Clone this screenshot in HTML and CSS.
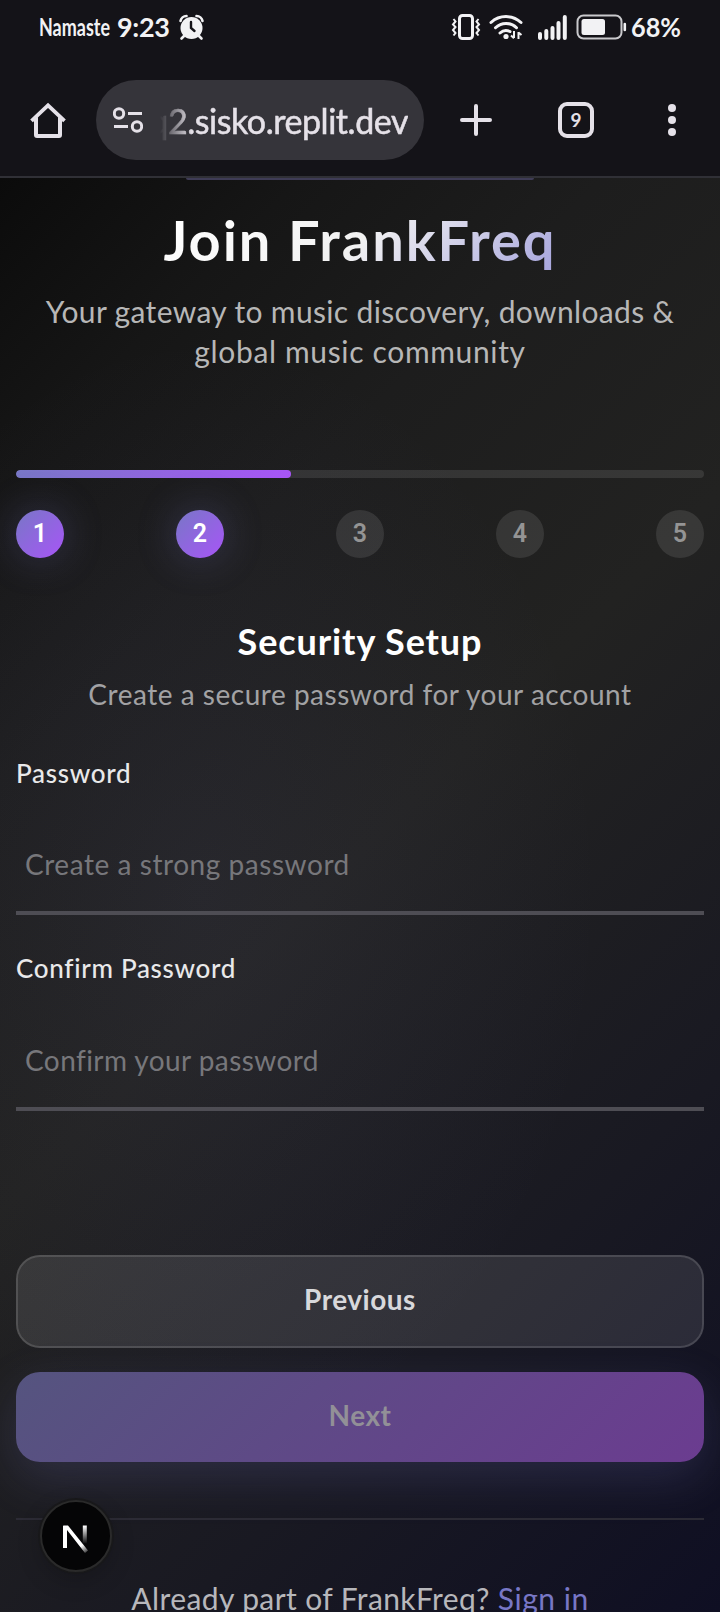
FILE: index.html
```html
<!DOCTYPE html>
<html lang="en">
<head>
<meta charset="utf-8">
<title>Join FrankFreq</title>
<link rel="stylesheet" href="styles.css">
</head>
<body>
<div class="screen">
  <header class="chrome">
    <div class="status">
      <svg class="status-left" width="172" height="36" viewBox="0 0 172 36">
        <g class="status-text">
          <text x="0" y="28" font-size="25" textLength="71" lengthAdjust="spacingAndGlyphs">Namaste</text>
          <text x="78" y="29" font-size="27" textLength="53" lengthAdjust="spacing">9:23</text>
        </g>
        <g fill="none" stroke="#f2f2f4" stroke-linecap="round">
          <circle cx="152.500" cy="20" r="11" fill="#f2f2f4" stroke="none"/>
          <path d="M141.500 13a6 6 0 0 1 6-5M163.500 13a6 6 0 0 0-6-5" stroke-width="2.600"/>
          <path d="M145 28l-2.500 2.500M160 28l2.500 2.500" stroke-width="2.600"/>
          <path d="M152 14v6l3.500 3" stroke="#141318" stroke-width="2.400"/>
        </g>
      </svg>
      <svg class="status-right" width="232" height="36" viewBox="0 0 232 36">
        <g fill="none" stroke="#f2f2f4" stroke-width="2.600">
          <rect x="9.500" y="7.500" width="13" height="23" rx="3" stroke-width="3"/>
          <path d="M3.500 11l2 2.500-2.500 3 2.500 2.500-2.500 3 2.500 3-2 2.500M28.500 11l-2 2.500 2.500 3-2.500 2.500 2.500 3-2.500 3 2 2.500" stroke-width="2"/>
          <g stroke-linecap="round" stroke-width="3">
            <path d="M41 14.500a22 22 0 0 1 30 0M45.500 19.700a15 15 0 0 1 21 0M50 25a9 9 0 0 1 10-1.500"/>
          </g>
          <circle cx="56" cy="28.500" r="2.600" fill="#f2f2f4" stroke="none"/>
          <path d="M64 23v7M61 27.500l3 2.800M68.500 31v-7M68.500 24.500l3 2.500" stroke-width="2"/>
          <g stroke-width="4" stroke-linecap="round">
            <path d="M90 26v4M96.300 23v7M102.500 20v10M108.500 15v15M114.800 9v21"/>
          </g>
          <rect x="127.500" y="7.500" width="44" height="23" rx="6" stroke-width="2" stroke="#c9c9cc"/>
          <rect x="131.500" y="11" width="23.500" height="16" rx="2.500" fill="#f2f2f4" stroke="none"/>
          <path d="M174.800 16v6" stroke-linecap="round"/>
        </g>
        <g class="status-text"><text x="181" y="29" font-size="27" textLength="50" lengthAdjust="spacingAndGlyphs">68%</text></g>
      </svg>
    </div>
    <div class="toolbar">
      <svg width="36" height="36" viewBox="0 0 36 36" fill="none" stroke="#e5e1e8" stroke-width="4" stroke-linejoin="round" stroke-linecap="round">
        <path d="M2 17.500L18 2.500 34 17.500" stroke-linecap="square" stroke-linejoin="miter" transform="translate(1 1) scale(.945)"/>
        <path d="M6 16v17a1 1 0 0 0 1 1h22a1 1 0 0 0 1-1V16"/>
      </svg>
      <div class="omnibox">
        <svg width="30" height="26" viewBox="0 0 30 26" fill="none" stroke="#e5e1e8" stroke-width="3">
          <circle cx="6" cy="6.500" r="4.700"/><path d="M15 6.500h14M1 19.500h14"/><circle cx="24" cy="19.500" r="4.700"/>
        </svg>
        <div class="url"><span class="url-text">q2.sisko.replit.dev</span></div>
      </div>
      <svg class="plus" width="32" height="32" viewBox="0 0 32 32" fill="none" stroke="#e5e1e8" stroke-width="4" stroke-linecap="round"><path d="M16 2v28M2 16h28"/></svg>
      <div class="tabs">9</div>
      <svg class="dots" width="8" height="32" viewBox="0 0 8 32" fill="#e5e1e8"><circle cx="4" cy="4" r="4"/><circle cx="4" cy="16" r="4"/><circle cx="4" cy="28" r="4"/></svg>
    </div>
  </header>
  <main class="page">
    <div class="logo-edge"></div>
    <h1 class="title"><span class="title-text">Join FrankFreq</span></h1>
    <p class="tagline"><span class="tag-a">Your gateway to music discovery, downloads &amp;</span><br><span class="tag-b">global music community</span></p>
    <div class="progress"><div class="progress-fill" style="width:40%"></div></div>
    <div class="steps">
      <span class="step on">1</span><span class="step on">2</span><span class="step">3</span><span class="step">4</span><span class="step">5</span>
    </div>
    <h2 class="section-title">Security Setup</h2>
    <p class="section-sub">Create a secure password for your account</p>
    <div class="field first">
      <label class="label" for="pw">Password</label>
      <input class="input" id="pw" type="password" placeholder="Create a strong password">
    </div>
    <div class="field second">
      <label class="label" for="pw2">Confirm Password</label>
      <input class="input confirm" id="pw2" type="password" placeholder="Confirm your password">
    </div>
    <button class="btn prev">Previous</button>
    <button class="btn next"><span class="next-text">Next</span></button>
    <div class="footer">Already part of FrankFreq? <a class="signin">Sign in</a></div>
    <div class="dev-badge">
      <svg width="72" height="72" viewBox="0 0 72 72" fill="none">
        <defs>
          <linearGradient id="ga" x1="44" y1="44" x2="50" y2="53" gradientUnits="userSpaceOnUse"><stop stop-color="#fff"/><stop offset="1" stop-color="#fff" stop-opacity="0"/></linearGradient>
          <linearGradient id="gb" x1="0" y1="26" x2="0" y2="44" gradientUnits="userSpaceOnUse"><stop stop-color="#fff"/><stop offset="1" stop-color="#fff" stop-opacity="0"/></linearGradient>
        </defs>
        <path d="M25 48V26" stroke="#fff" stroke-width="4"/>
        <path d="M23 25.500h5L48 50.500l-3 2.500L27 30z" fill="url(#ga)"/>
        <path d="M44.800 25.500v18" stroke="url(#gb)" stroke-width="4"/>
      </svg>
    </div>
  </main>
</div>
</body>
</html>
```
FILE: styles.css
```css
* { box-sizing: border-box; margin: 0; padding: 0; }
body { background: #0c0c0c; font-family: Lato, "Open Sans", sans-serif; font-kerning: normal; }
.screen { width: 720px; height: 1612px; overflow: hidden; display: flex; flex-direction: column; }

/* browser chrome */
.chrome { flex: none; height: 178px; background: #141318; border-bottom: 2px solid #303036; }
.status { height: 80px; padding: 8px 38px 0 39px; display: flex; justify-content: space-between; align-items: flex-start; }
.status-text { fill: #f2f2f4; font-family: Lato, sans-serif; font-weight: 700; }
.toolbar { height: 80px; display: flex; align-items: center; padding: 0 44px 0 30px; }
.omnibox { width: 328px; height: 80px; margin-left: 30px; padding-left: 17px; border-radius: 40px; background: #35343a; display: flex; align-items: center; }
.url { width: 248px; height: 48px; margin-left: 17px; padding-top: 2px; overflow: hidden; display: flex; justify-content: flex-end; -webkit-mask-image: linear-gradient(90deg, transparent 0, #000 32px); mask-image: linear-gradient(90deg, transparent 0, #000 32px); }
.url-text { font-size: 34px; line-height: 46px; letter-spacing: -0.45px; color: #e5e1e8; white-space: nowrap; -webkit-text-stroke: 0.5px #e5e1e8; }
.plus { margin-left: 36px; }
.tabs { width: 36px; height: 36px; margin-left: 66px; border: 4px solid #e5e1e8; border-radius: 9px; color: #e5e1e8; font: 700 19px/28px Lato, sans-serif; text-align: center; }
.dots { margin-left: auto; }

/* page */
.page { position: relative; flex: 1; min-height: 0; padding: 0 16px; overflow: hidden; text-align: center;
  background:
    radial-gradient(ellipse 400px 560px at 28% 50%, rgba(120, 119, 198, 0.08), transparent),
    linear-gradient(135deg, #0b0b0b 0%, #161616 14%, #1d1d1d 28%, #222221 48%, #191922 75%, #0f0f23 100%); }
.logo-edge { width: 348px; height: 2px; margin: 0 auto; background: #3f3c56; border-radius: 0 0 20px 20px; }
.title { margin-top: 26px; height: 68px; font-size: 56px; line-height: 68px; font-weight: 700; letter-spacing: 1.95px; }
.title-text { background: linear-gradient(135deg, #fff 0%, #f2f2f2 50%, #a5a3dc 100%); -webkit-background-clip: text; background-clip: text; color: transparent; display: inline-block; }
.tagline { margin-top: 17px; font-size: 30px; line-height: 40px; color: #b7b7b7; white-space: nowrap; }
.tag-a { letter-spacing: 0.35px; }
.tag-b { letter-spacing: 0.65px; }
.progress { margin-top: 99px; height: 8px; border-radius: 4px; background: rgba(255, 255, 255, 0.1); overflow: hidden; }
.progress-fill { height: 8px; border-radius: 4px; background: linear-gradient(90deg, #7877c6, #a855f7); }
.steps { margin-top: 32px; display: flex; justify-content: space-between; }
.step { width: 48px; height: 48px; border-radius: 50%; background: rgba(255, 255, 255, 0.1); color: #949494; font: 600 25px/48px Roboto, sans-serif; }
.step.on { background: linear-gradient(135deg, #7877c6, #a855f7); color: #fff; box-shadow: 0 0 40px rgba(120, 119, 198, 0.3); }
.section-title { margin-top: 61px; font-size: 36px; line-height: 44px; font-weight: 700; letter-spacing: 0.9px; color: #fff; }
.section-sub { margin-top: 11px; font-size: 28px; line-height: 40px; letter-spacing: 0.52px; color: #a2a2a4; }
.field { text-align: left; display: flex; flex-direction: column; gap: 28px; }
.first { margin-top: 43px; }
.second { margin-top: 37px; }
.label { font-size: 26px; line-height: 32px; font-weight: 500; letter-spacing: 0.7px; color: #e9e9ea; }
.input { width: 100%; height: 98px; padding: 0 9px; border: 0; border-bottom: 4px solid #4e4d54; border-radius: 0; background: none; outline: 0; font: 28px Lato, sans-serif; letter-spacing: 0.55px; color: #fff; }
.second { gap: 29px; }
.confirm { letter-spacing: 0.42px; }
.input::placeholder { color: #77777b; opacity: 1; }
.btn { display: block; width: 100%; border: 0; border-radius: 24px; padding-bottom: 4px; font: 700 28px Lato, sans-serif; letter-spacing: 0.5px; }
.prev { height: 93px; margin-top: 144px; padding-bottom: 6px; background: rgba(255, 255, 255, 0.1); border: 2px solid rgba(255, 255, 255, 0.22); background-clip: padding-box; color: #d8d8db; }
.next { height: 90px; margin-top: 24px; background: linear-gradient(135deg, #55547f, #6b3c90); color: #929097; box-shadow: 0 16px 48px rgba(120, 119, 198, 0.2); }
.footer { margin-top: 56px; padding-top: 58px; border-top: 2px solid #2c2b35; font-size: 30px; line-height: 40px; letter-spacing: 0.4px; white-space: nowrap; color: #b7b7bb; }
.signin { color: #7877c6; letter-spacing: 0.5px; }

/* floating dev indicator */
.dev-badge { position: absolute; left: 40px; top: 1322px; width: 72px; height: 72px; border-radius: 50%; background: #050506; border: 2px solid #2a2a2a; box-shadow: 0 0 0 2px #18181a, 0 8px 24px rgba(0, 0, 0, 0.2); }
.dev-badge svg { display: block; margin: -2px; }
```
